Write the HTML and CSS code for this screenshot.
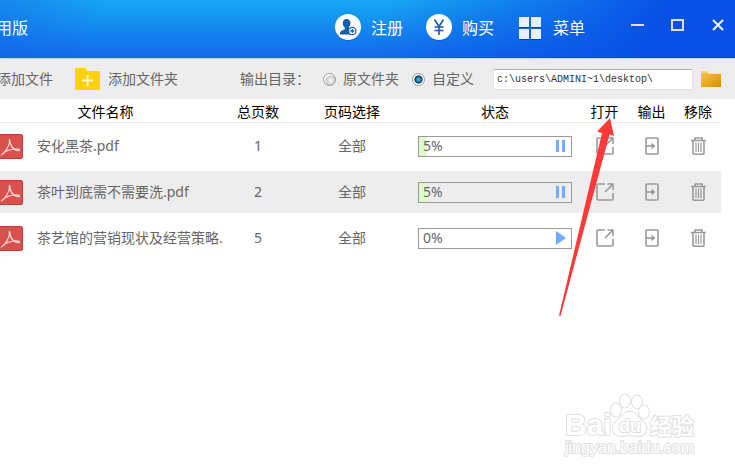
FILE: index.html
```html
<!DOCTYPE html>
<html lang="zh-CN">
<head>
<meta charset="utf-8">
<title>PDF 转换</title>
<link rel="stylesheet" href="styles.css">
</head>
<body>
<svg class="defs" aria-hidden="true">
  <defs>
    <linearGradient id="gold" x1="0" y1="0" x2="1" y2="1"><stop offset="0" stop-color="#fbc74c"/><stop offset="1" stop-color="#d98c05"/></linearGradient>
    <symbol id="pdf" viewBox="0 0 23 25">
      <rect x="-2" y=".5" width="24.500" height="24" rx="1.500" fill="#d9504c" stroke="#c43a38"/>
      <path d="M2 20.500C5 19 8.500 13 9.300 9c.3-2-.2-3.500.2-3.500s.3 2 .7 3.500c.8 3 3.500 6.300 6 7.300 1.500.5 3.300.5 3.300-.3s-2-1.200-4.500-1C11 15.300 4 17 2 20.500z" fill="none" stroke="#f8dddd" stroke-width="1.200"/>
    </symbol>
    <symbol id="open" viewBox="0 0 18 18">
      <path d="M9 1H2Q1 1 1 2v14q0 1 1 1h14q1 0 1-1V10M11.500 1H17v6M16.500 1.500 9 9" fill="none" stroke="#999" stroke-width="1.600"/>
    </symbol>
    <symbol id="export" viewBox="0 0 14 18">
      <rect x="1" y="1" width="12" height="16" rx="1" fill="none" stroke="#999" stroke-width="1.600"/>
      <path d="M1 9h7" stroke="#999" stroke-width="1.600"/><path d="M6.500 5.800 10.500 9l-4 3.200z" fill="#999"/>
    </symbol>
    <symbol id="trash" viewBox="0 0 15 18">
      <path d="M0 3.500h15M4 3V1h7v2M2 4v12q0 1.300 1.300 1.300h8.400q1.300 0 1.300-1.300V4" fill="none" stroke="#999" stroke-width="1.600"/>
      <path d="M5 5.500V15M7.500 5.500V15M10 5.500V15" stroke="#999" stroke-width="1.200"/>
    </symbol>
    <symbol id="pause" viewBox="0 0 10 12"><path d="M0 0h3v12H0zM6 0h3v12H6z" fill="#70acff"/></symbol>
    <symbol id="play" viewBox="0 0 10 12"><path d="M0-1 10 6 0 13z" fill="#70acff"/></symbol>
  </defs>
</svg>

<header class="titlebar">
  <span class="product">用版</span>
  <nav class="menu">
    <button class="menu-item">
      <svg width="26" height="27" viewBox="0 0 26 27"><circle cx="13" cy="14" r="12.800" fill="#0845a5" opacity=".6"/><circle cx="13" cy="13" r="13" fill="#fff"/><path d="M11.500 5c2.600 0 4 1.700 4 4.200 0 1.800-.6 2.900-1.500 3.900-.4 1.500.4 2 1.800 2.500-1.500 1.400-1.600 3-.8 4.900H5c0-3 1-3.700 4-4.700 1-.5 1-1.500.5-2.600-1.200-1-1.700-2.300-1.700-4C7.800 6.700 9 5 11.500 5z" fill="#165da9"/><circle cx="17.300" cy="17" r="3.700" fill="#fff" stroke="#165da9" stroke-width="1.200"/><path d="M15.300 17h4M17.300 15v4" stroke="#165da9" stroke-width="1.300"/></svg>
      <span>注册</span>
    </button>
    <button class="menu-item">
      <svg width="26" height="27" viewBox="0 0 26 27"><circle cx="13" cy="14" r="12.800" fill="#0845a5" opacity=".6"/><circle cx="13" cy="13" r="13" fill="#fff"/><path d="M8.500 5.500 13 12.500l4.500-7M13 12v9M8.500 13h9M8.500 16.500h9" fill="none" stroke="#165da9" stroke-width="1.600"/></svg>
      <span>购买</span>
    </button>
    <button class="menu-item">
      <svg width="26" height="27" viewBox="0 0 26 27"><path d="M2 3h10v11H2zM14 3h10v11H14zM2 15h10v11H2zM14 15h10v11H14z" fill="#0a3fa0"/><path d="M2 3h10v10H2zM14 3h10v10H14zM2 15h10v10H2zM14 15h10v10H14z" fill="#e6f0ff"/></svg>
      <span>菜单</span>
    </button>
  </nav>
  <div class="window-buttons">
    <button aria-label="最小化"><svg width="14" height="14"><path d="M0 7h13" stroke="#dde1e6" stroke-width="2"/></svg></button>
    <button aria-label="最大化"><svg width="14" height="14"><path d="M1 2h11v10H1z" fill="none" stroke="#dde1e6" stroke-width="2"/></svg></button>
    <button aria-label="关闭"><svg width="14" height="14"><path d="M2 2 12 12M12 2 2 12" stroke="#f4f6fa" stroke-width="2"/></svg></button>
  </div>
</header>

<div class="toolbar">
  <button class="tool">添加文件</button>
  <button class="tool">
    <svg width="25" height="22" viewBox="0 0 25 22"><path d="M0 1.500Q0 0 1.500 0h9l2 3H23.500Q25 3 25 4.500v16q0 1.500-1.500 1.500h-22Q0 22 0 20.500z" fill="#fdd20d"/><path d="M12.500 7v11M7 12.500h11" stroke="#fff6d0" stroke-width="2"/></svg>
    <span>添加文件夹</span>
  </button>
  <div class="output" role="radiogroup" aria-label="输出目录">
    <span>输出目录：</span>
    <label><input type="radio" name="dir">原文件夹</label>
    <label><input type="radio" name="dir" checked>自定义</label>
  </div>
  <input class="path" type="text" aria-label="输出目录路径" value="c:\users\ADMINI~1\desktop\">
  <button class="browse" aria-label="浏览"><svg width="20" height="16" viewBox="0 0 20 16"><path d="M0 0h6l1 2h13v14H0z" fill="url(#gold)"/><path d="M0 1h6M7 2.500h13" stroke="#ffe19a"/></svg></button>
</div>

<main class="files">
  <table>
    <colgroup><col><col class="c-pages"><col class="c-range"><col class="c-status"><col class="c-action"><col class="c-action"><col class="c-last"></colgroup>
    <thead>
      <tr><th class="name-head">文件名称</th><th>总页数</th><th>页码选择</th><th>状态</th><th>打开</th><th>输出</th><th>移除</th></tr>
    </thead>
    <tbody>
      <tr>
        <td><div class="name"><svg width="23" height="25"><use href="#pdf"/></svg><span>安化黑茶.pdf</span></div></td>
        <td>1</td><td>全部</td>
        <td><div class="progress"><span class="fill" style="width:5%"></span><span class="percent">5%</span><button aria-label="暂停"><svg width="10" height="12"><use href="#pause"/></svg></button></div></td>
        <td><button aria-label="打开"><svg width="18" height="18"><use href="#open"/></svg></button></td>
        <td><button aria-label="输出"><svg width="14" height="18"><use href="#export"/></svg></button></td>
        <td><button aria-label="移除"><svg width="15" height="18"><use href="#trash"/></svg></button></td>
      </tr>
      <tr class="selected">
        <td><div class="name"><svg width="23" height="25"><use href="#pdf"/></svg><span>茶叶到底需不需要洗.pdf</span></div></td>
        <td>2</td><td>全部</td>
        <td><div class="progress"><span class="fill" style="width:5%"></span><span class="percent">5%</span><button aria-label="暂停"><svg width="10" height="12"><use href="#pause"/></svg></button></div></td>
        <td><button aria-label="打开"><svg width="18" height="18"><use href="#open"/></svg></button></td>
        <td><button aria-label="输出"><svg width="14" height="18"><use href="#export"/></svg></button></td>
        <td><button aria-label="移除"><svg width="15" height="18"><use href="#trash"/></svg></button></td>
      </tr>
      <tr>
        <td><div class="name"><svg width="23" height="25"><use href="#pdf"/></svg><span>茶艺馆的营销现状及经营策略.</span></div></td>
        <td>5</td><td>全部</td>
        <td><div class="progress"><span class="fill" style="width:0%"></span><span class="percent">0%</span><button aria-label="开始"><svg class="play" width="10" height="12"><use href="#play"/></svg></button></div></td>
        <td><button aria-label="打开"><svg width="18" height="18"><use href="#open"/></svg></button></td>
        <td><button aria-label="输出"><svg width="14" height="18"><use href="#export"/></svg></button></td>
        <td><button aria-label="移除"><svg width="15" height="18"><use href="#trash"/></svg></button></td>
      </tr>
    </tbody>
  </table>
  <svg class="arrow" width="56" height="200" viewBox="0 0 56 200" aria-hidden="true"><path d="M51 0 55 18l-4.500-1.500L1.500 198 0 197.500 43 15l-5-1.500z" fill="#fe3a39"/></svg>
</main>

<svg class="watermark" width="140" height="72" viewBox="0 0 140 72" role="img" aria-label="百度经验">
  <g fill="#fff" stroke="#e0e0e0" stroke-width="2" paint-order="stroke" stroke-linejoin="round">
    <text x="3" y="45" font-size="30" font-weight="700">Bai</text>
    <ellipse cx="54" cy="20" rx="5" ry="6.500"/><ellipse cx="63" cy="11" rx="5" ry="6.500"/><ellipse cx="75" cy="12" rx="5" ry="6.500"/><ellipse cx="82" cy="22" rx="5" ry="6.500"/>
    <path d="M68 22c6 0 8 6 12 9 7 4 6 14-3 15-4 0-6-1-9-1s-6 1-10 1c-9-1-9-11-3-15 5-4 6-9 13-9z"/>
    <text x="57" y="42" font-size="18" font-weight="700">du</text>
    <text x="88" y="44" font-size="22" font-weight="700">经验</text>
    <text x="3" y="63" font-size="16">jingyan.baidu.com</text>
  </g>
</svg>
</body>
</html>
```
FILE: styles.css
```css
* { box-sizing: border-box; }

body {
  position: relative;
  min-height: 100vh;
  margin: 0;
  overflow-x: hidden;
  background: #fff;
  color: #666;
  font: 14px/20px "Noto Sans", "Noto Sans CJK SC", sans-serif;
}

button {
  padding: 0;
  border: 0;
  background: none;
  color: inherit;
  font: inherit;
}

svg { display: block; flex: none; }
.defs { position: absolute; width: 0; height: 0; }

.titlebar {
  display: flex;
  align-items: center;
  height: 58px;
  padding: 0 1px 3px 0;
  background:
    linear-gradient(115deg, rgba(20, 90, 228, .4), rgba(20, 120, 235, 0) 14%, rgba(8, 80, 230, 0) 52%, rgba(8, 80, 230, .6) 74%, #0850e6 88%),
    linear-gradient(#16a6f3, #1269eb);
  color: #fff;
  font-size: 16px;
}
.product { margin-left: -4px; }
.menu { display: flex; gap: 23px; margin: 0 37px 0 auto; }
.menu-item { display: flex; align-items: center; gap: 10px; }
.window-buttons { display: flex; gap: 8px; padding-bottom: 6px; }
.window-buttons button { display: grid; place-items: center; width: 32px; height: 32px; }

.toolbar {
  display: flex;
  align-items: center;
  height: 41px;
  padding-right: 14px;
  border-top: 1px solid #ccc;
  background: #ededed;
  white-space: nowrap;
}
.tool { display: flex; align-items: center; gap: 8px; margin-right: 22px; }
.tool:first-child { margin-left: -3px; }
.output { display: flex; align-items: center; gap: 13px; margin: 0 19px 0 auto; }
.output label { display: flex; align-items: center; gap: 7px; }
.output input {
  appearance: none;
  width: 13px;
  height: 13px;
  margin: 0;
  border: 1px solid #999;
  border-radius: 50%;
  background: radial-gradient(circle at 60% 60%, #f2f2f2 10%, #c8c8c8 50%, #fff 60%);
}
.output input:checked { background: radial-gradient(circle, #43b9e8 8%, #0c3a63 48%, #fff 58%); }
.path {
  width: 200px;
  height: 21px;
  padding: 0 3px;
  border: 1px solid #dce3ea;
  border-top-color: #abadb3;
  border-radius: 2px;
  background: #fff;
  color: #333;
  font: 10px "Liberation Mono", monospace;
}
.browse { margin-left: 8px; }

.files { position: relative; padding-right: 14px; }
table { width: 100%; border-collapse: separate; border-spacing: 0; table-layout: fixed; }
.c-pages { width: 74px; }
.c-range { width: 114px; }
.c-status { width: 172px; }
.c-action { width: 47px; }
.c-last { width: 46px; }
th {
  height: 24px;
  padding: 2px 0 0;
  border-bottom: 1px solid #e8e8e8;
  color: #000;
  font-weight: 400;
  text-align: center;
}
.name-head { padding-right: 10px; }
td {
  height: 46px;
  padding: 0;
  border: solid transparent;
  border-width: 2px 0;
  background-clip: padding-box;
  text-align: center;
  white-space: nowrap;
}
.selected td { background-color: #ededed; }
td > button { display: block; margin: 0 auto; }
.name { display: flex; align-items: center; gap: 14px; }
.progress {
  display: flex;
  align-items: center;
  position: relative;
  height: 21px;
  margin: 0 9px;
  padding: 0 5px 0 4px;
  border: 1px solid #999;
}
.play { overflow: visible; }
.play use { overflow: visible; }
#play { overflow: visible; }
.fill { position: absolute; top: 0; bottom: 0; left: 0; background: #dff8cc; }
.percent { position: relative; margin-right: auto; }

.arrow { position: absolute; top: 19px; right: 120px; pointer-events: none; }
.watermark {
  position: absolute;
  right: 33px;
  bottom: 11px;
  font-family: "Liberation Sans", "Noto Sans CJK SC", sans-serif;
}
```
